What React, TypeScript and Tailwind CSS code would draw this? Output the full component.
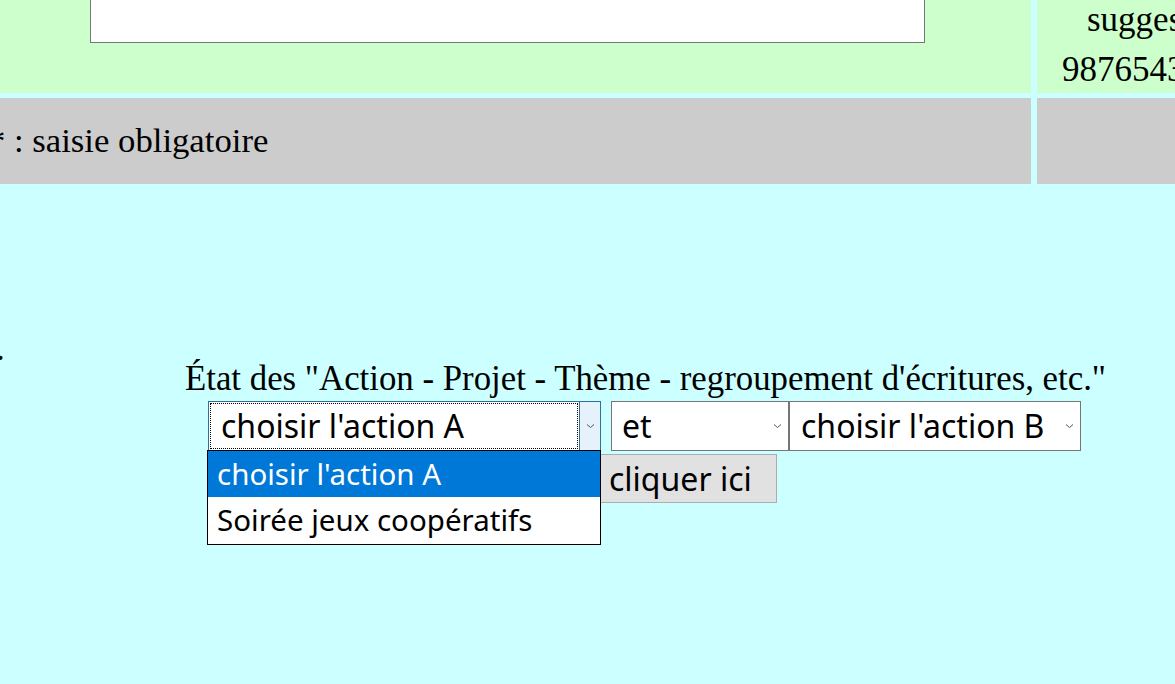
import React from "react";

const serif = { fontFamily: '"Liberation Serif", "Times New Roman", serif' };
const sans = { fontFamily: '"Noto Sans", "Open Sans", sans-serif' };

function Chevron({ className = "" }: { className?: string }) {
  return (
    <svg width="9" height="6" viewBox="0 0 9 6" className={className}>
      <path d="M1 1.5 L4.5 4.5 L8 1.5" fill="none" stroke="#555" strokeWidth="1" />
    </svg>
  );
}

export default function App() {
  return (
    <div className="relative w-[1175px] h-[684px] overflow-hidden bg-[#ccffff] text-black" style={serif}>
      {/* top table */}
      <div className="flex flex-col gap-[5px]">
        <div className="flex gap-[6px] h-[93px]">
          <div className="w-[1031px] shrink-0 bg-[#ccffcc]">
            <div className="ml-[90px] w-[835px] h-[44px] -mt-px bg-white border border-[#767676]" />
          </div>
          <div className="flex-1 bg-[#ccffcc] text-[35px] leading-[54px] whitespace-nowrap overflow-hidden">
            <div className="pl-[50px] -mt-[7px]">suggestion</div>
            <div className="pl-[25px] -mt-[4px]">98765432</div>
          </div>
        </div>
        <div className="flex gap-[6px] h-[86px]">
          <div className="w-[1031px] shrink-0 bg-[#cccccc] flex items-center">
            <span className="ml-[-12px] text-[34.7px] leading-[40px] whitespace-nowrap">* : saisie obligatoire</span>
          </div>
          <div className="flex-1 bg-[#cccccc]" />
        </div>
      </div>

      <div className="ml-[-4px] mt-[145px] h-[30px] text-[35px] leading-[40px]">.</div>

      <div className="ml-[185px] h-[40px] text-[34.8px] leading-[40px] whitespace-nowrap">
        État des "Action - Projet - Thème - regroupement d'écritures, etc."
      </div>

      <div className="ml-[208px] mt-[2px] flex items-start" style={sans}>
        {/* select A focused */}
        <div className="relative">
          <div className="flex w-[393px] h-[50px] border border-[#2f6f9a] bg-white">
            <div className="flex-1 m-[1px] border border-dotted border-black flex items-center pl-[10px] text-[32px] leading-none whitespace-nowrap">
              choisir l'action A
            </div>
            <div className="w-[21px] bg-[#e5f1fb] border-l border-[#2f6f9a] flex items-center justify-center">
              <Chevron />
            </div>
          </div>
          {/* dropdown list */}
          <div className="absolute left-[-1px] top-[49px] w-[394px] border border-black bg-white z-10 text-[29.5px] whitespace-nowrap">
            <div className="h-[46px] bg-[#0078d7] text-white flex items-center pl-[9px]">choisir l'action A</div>
            <div className="h-[47px] flex items-center pl-[9px]">Soirée jeux coopératifs</div>
          </div>
          {/* button */}
          <div className="absolute left-[392px] top-[53px] w-[177px] h-[49px] bg-[#e1e1e1] border border-[#adadad] flex items-center pl-[8px] text-[32px] whitespace-nowrap">
            cliquer ici
          </div>
        </div>
        {/* select et */}
        <div className="ml-[10px] w-[178px] h-[50px] border border-[#767676] bg-white flex items-center pl-[10px] pr-[6px] text-[32px]">
          <span className="flex-1">et</span>
          <Chevron />
        </div>
        {/* select B */}
        <div className="w-[292px] h-[50px] border border-[#767676] bg-white flex items-center pl-[11px] pr-[6px] text-[32px] whitespace-nowrap">
          <span className="flex-1">choisir l'action B</span>
          <Chevron />
        </div>
      </div>
    </div>
  );
}
